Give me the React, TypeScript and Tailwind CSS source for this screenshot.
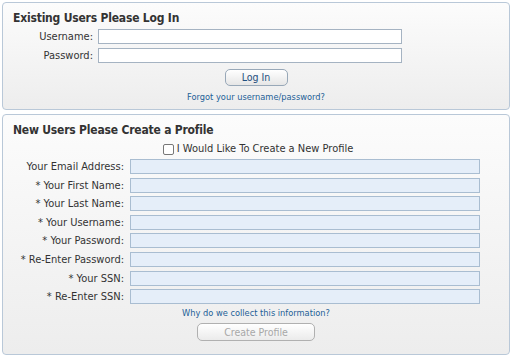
const fields = [
  "Your Email Address:",
  "* Your First Name:",
  "* Your Last Name:",
  "* Your Username:",
  "* Your Password:",
  "* Re-Enter Password:",
  "* Your SSN:",
  "* Re-Enter SSN:",
];

function Panel({ title, children, className }: { title: string; children: React.ReactNode; className?: string }) {
  return (
    <section
      className={
        "rounded-[4px] border border-[#b9c8d8] bg-gradient-to-b from-[#fcfcfc] to-[#ededed] px-[10px] pt-[8px] " +
        (className ?? "")
      }
    >
      <h2 className="text-[12px] font-bold leading-[15px] tracking-[-0.2px] text-[#333]">{title}</h2>
      {children}
    </section>
  );
}

export default function App() {
  return (
    <div className="flex h-[355px] w-[512px] flex-col gap-[4px] bg-white px-[2px] pt-[2px] font-['DejaVu_Sans_Condensed','DejaVu_Sans',sans-serif] text-[#333]">
      <Panel title="Existing Users Please Log In" className="h-[108px]">
        <div className="mt-[3px] grid auto-rows-[15px] grid-cols-[80px_304px] items-center gap-x-[5px] gap-y-[4px]">
          <label className="text-right text-[11px] leading-[15px]">Username:</label>
          <input className="h-[15px] border border-[#a5b3c2] bg-white" />
          <label className="text-right text-[11px] leading-[15px]">Password:</label>
          <input type="password" className="h-[15px] border border-[#a5b3c2] bg-white" />
        </div>
        <div className="mt-[6px] flex flex-col items-center">
          <button className="h-[17px] w-[63px] rounded-[5px] border border-[#98a8b8] bg-gradient-to-b from-white to-[#e6e6e6] text-[10.5px] leading-none text-[#1f4f7f]">
            Log In
          </button>
          <a className="mt-[5px] text-[9.2px] leading-[12px] text-[#235f97]">Forgot your username/password?</a>
        </div>
      </Panel>
      <Panel title="New Users Please Create a Profile" className="flex-1">
        <div className="mt-[4px] flex h-[14px] items-center justify-center gap-[3px] pl-[4px]">
          <span className="h-[11px] w-[11px] rounded-[2px] border border-[#777] bg-white" />
          <span className="text-[11px] leading-[14px]">I Would Like To Create a New Profile</span>
        </div>
        <div className="mt-[3px] grid auto-rows-[15px] grid-cols-[111px_350px] items-center gap-x-[6px] gap-y-[3.6px]">
          {fields.map((f) => (
            <div key={f} className="contents">
              <label className="whitespace-nowrap text-right text-[11px] leading-[15px]">{f}</label>
              <input className="h-[15px] border border-[#a9bdd1] bg-[#e5eef9]" />
            </div>
          ))}
        </div>
        <div className="mt-[3px] flex flex-col items-center">
          <a className="text-[9.2px] leading-[12px] text-[#235f97]">Why do we collect this information?</a>
          <button className="mt-[4px] h-[18px] w-[118px] rounded-[5px] border border-[#b0b0b0] bg-gradient-to-b from-white to-[#ebebeb] text-[10.5px] leading-none text-[#a8a8a8]">
            Create Profile
          </button>
        </div>
      </Panel>
    </div>
  );
}
